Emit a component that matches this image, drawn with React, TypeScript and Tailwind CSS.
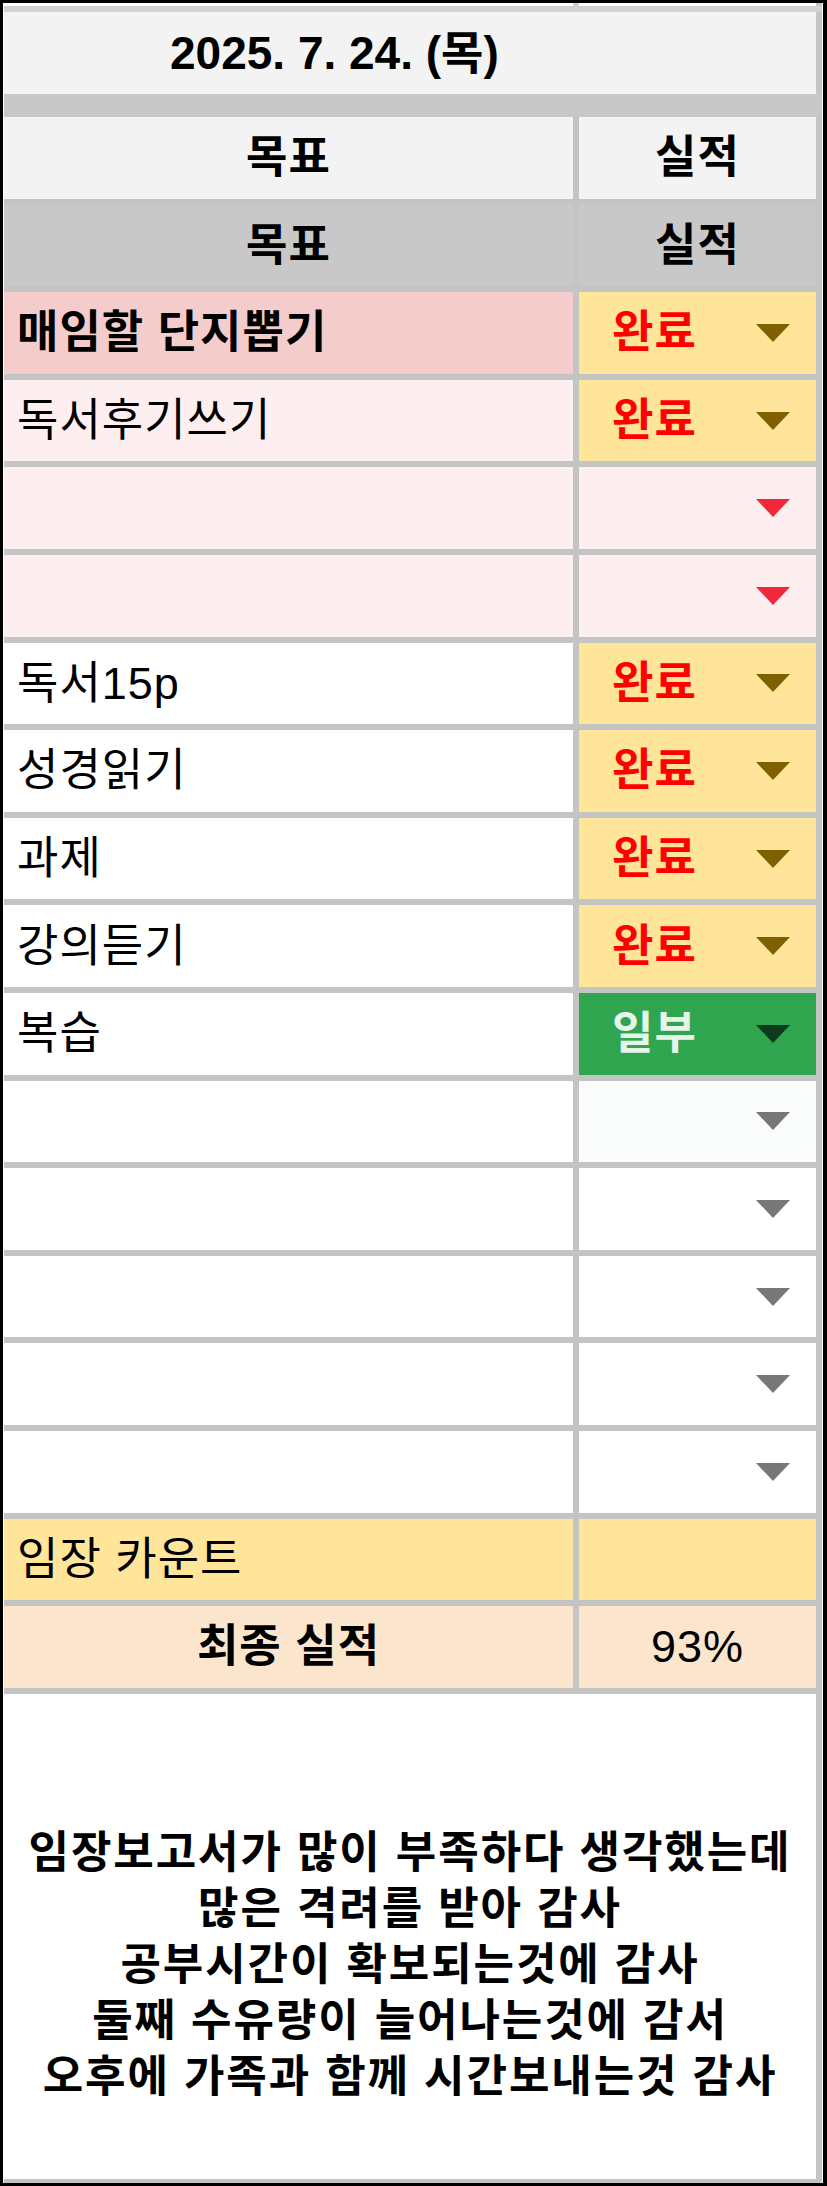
import React from 'react';

type Status = 'done' | 'partial' | 'none' | 'blank';

interface RowData {
  goal: string;
  bold?: boolean;
  center?: boolean;
  leftBg: string;
  rightBg: string;
  status: Status;
  arrow?: string;
  value?: string;
}

const Arrow: React.FC<{ color: string }> = ({ color }) => (
  <svg width="34" height="18" viewBox="0 0 34 18" className="shrink-0">
    <polygon points="0,0 34,0 17,18" fill={color} />
  </svg>
);

const rows: RowData[] = [
  { goal: '매임할 단지뽑기', bold: true, leftBg: 'bg-[#f4cccc]', rightBg: 'bg-[#ffe599]', status: 'done' },
  { goal: '독서후기쓰기', leftBg: 'bg-[#fdefef]', rightBg: 'bg-[#ffe599]', status: 'done' },
  { goal: '', leftBg: 'bg-[#fdefef]', rightBg: 'bg-[#fdefef]', status: 'none', arrow: '#f2283a' },
  { goal: '', leftBg: 'bg-[#fdefef]', rightBg: 'bg-[#fdefef]', status: 'none', arrow: '#f2283a' },
  { goal: '독서15p', leftBg: 'bg-white', rightBg: 'bg-[#ffe599]', status: 'done' },
  { goal: '성경읽기', leftBg: 'bg-white', rightBg: 'bg-[#ffe599]', status: 'done' },
  { goal: '과제', leftBg: 'bg-white', rightBg: 'bg-[#ffe599]', status: 'done' },
  { goal: '강의듣기', leftBg: 'bg-white', rightBg: 'bg-[#ffe599]', status: 'done' },
  { goal: '복습', leftBg: 'bg-white', rightBg: 'bg-[#2fa54f]', status: 'partial' },
  { goal: '', leftBg: 'bg-white', rightBg: 'bg-[#fafbfb]', status: 'none', arrow: '#777777' },
  { goal: '', leftBg: 'bg-white', rightBg: 'bg-white', status: 'none', arrow: '#777777' },
  { goal: '', leftBg: 'bg-white', rightBg: 'bg-white', status: 'none', arrow: '#777777' },
  { goal: '', leftBg: 'bg-white', rightBg: 'bg-white', status: 'none', arrow: '#777777' },
  { goal: '', leftBg: 'bg-white', rightBg: 'bg-white', status: 'none', arrow: '#777777' },
  { goal: '임장 카운트', leftBg: 'bg-[#ffe599]', rightBg: 'bg-[#ffe599]', status: 'blank' },
  { goal: '최종 실적', bold: true, center: true, leftBg: 'bg-[#fce5cd]', rightBg: 'bg-[#fce5cd]', status: 'blank', value: '93%' },
];

const notes = [
  '임장보고서가 많이 부족하다 생각했는데',
  '많은 격려를 받아 감사',
  '공부시간이 확보되는것에 감사',
  '둘째 수유량이 늘어나는것에 감서',
  '오후에 가족과 함께 시간보내는것 감사',
];

const StatusCell: React.FC<{ row: RowData }> = ({ row }) => {
  if (row.status === 'blank') {
    return (
      <div className={`${row.rightBg} flex items-center justify-center`}>
        {row.value && <span className="text-[45px] text-black">{row.value}</span>}
      </div>
    );
  }
  return (
    <div className={`${row.rightBg} flex items-center pl-[33px] pr-[26px]`}>
      {row.status === 'done' && <span className="font-bold text-[45px] tracking-[1px] text-[#ff0000]">완료</span>}
      {row.status === 'partial' && <span className="font-bold text-[45px] tracking-[1px] text-[#e6f4ea]">일부</span>}
      <div className="flex-1" />
      <Arrow color={row.status === 'done' ? '#7f6000' : row.status === 'partial' ? '#0c3a1c' : row.arrow || '#777'} />
    </div>
  );
};

export default function App() {
  return (
    <div className="w-[827px] h-[2186px] bg-white border-black border-t-[3px] border-l-[3px] border-b-[3px] border-r-[4px] flex flex-col font-['Liberation_Sans','Noto_Sans_CJK_KR',sans-serif] leading-none">
      <div className="flex-1 flex flex-col px-px">
        {/* sliver of the row above */}
        <div className="h-[3px] grid grid-cols-[569px_6px_237px_6px]">
          <div className="bg-white" />
          <div className="bg-[#cfcfcf]" />
          <div className="bg-white" />
          <div className="bg-[#c4c4c4]" />
        </div>
        <div className="h-[6px] bg-[#d2d2d2]" />

        {/* date row */}
        <div className="h-[82px] flex border-r-[6px] border-[#c4c4c4] bg-[#f3f3f3] items-center pl-[166px]">
          <span className="font-bold text-[46px] text-black">2025. 7. 24. (목)</span>
        </div>
        <div className="h-[23px] bg-[#c8c8c8]" />

        {/* table */}
        <div className="grid grid-cols-[569px_237px] auto-rows-[81.6px] gap-[6px] bg-[#c4c4c4] pr-[6px] pb-[6px] text-[45px] tracking-[1px]">
          <div className="bg-[#f3f3f3] flex items-center justify-center font-bold">목표</div>
          <div className="bg-[#f3f3f3] flex items-center justify-center font-bold">실적</div>
          <div className="bg-[#c8c8c8] flex items-center justify-center font-bold">목표</div>
          <div className="bg-[#c8c8c8] flex items-center justify-center font-bold">실적</div>
          {rows.map((row, i) => (
            <React.Fragment key={i}>
              <div
                className={`${row.leftBg} flex items-center text-black ${row.bold ? 'font-bold' : ''} ${row.center ? 'justify-center' : 'pl-[13px]'}`}
              >
                {row.goal}
              </div>
              <StatusCell row={row} />
            </React.Fragment>
          ))}
        </div>

        {/* gratitude notes */}
        <div className="flex-1 border-r-[6px] border-b-[4px] border-[#c4c4c4] flex flex-col items-center pt-[131px]">
          {notes.map((line) => (
            <p key={line} className="font-bold text-[44px] tracking-[1.9px] leading-[56px] text-black whitespace-nowrap">
              {line}
            </p>
          ))}
        </div>
      </div>
    </div>
  );
}
